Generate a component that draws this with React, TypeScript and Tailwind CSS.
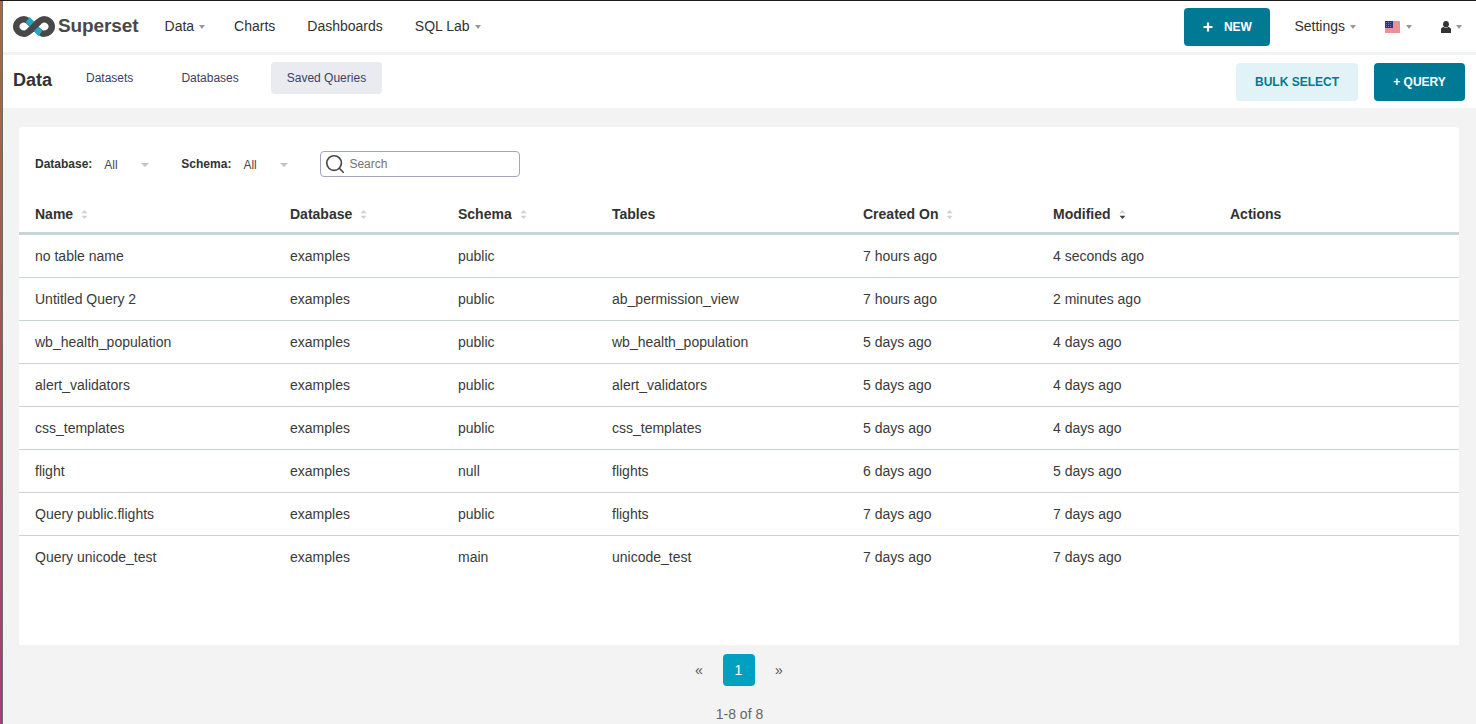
import { Search } from "lucide-react";

const rows = [
  ["no table name", "examples", "public", "", "7 hours ago", "4 seconds ago"],
  ["Untitled Query 2", "examples", "public", "ab_permission_view", "7 hours ago", "2 minutes ago"],
  ["wb_health_population", "examples", "public", "wb_health_population", "5 days ago", "4 days ago"],
  ["alert_validators", "examples", "public", "alert_validators", "5 days ago", "4 days ago"],
  ["css_templates", "examples", "public", "css_templates", "5 days ago", "4 days ago"],
  ["flight", "examples", "null", "flights", "6 days ago", "5 days ago"],
  ["Query public.flights", "examples", "public", "flights", "7 days ago", "7 days ago"],
  ["Query unicode_test", "examples", "main", "unicode_test", "7 days ago", "7 days ago"],
];

const columns = [
  { label: "Name", width: "w-[255px]", sort: "none" },
  { label: "Database", width: "w-[168px]", sort: "none" },
  { label: "Schema", width: "w-[154px]", sort: "none" },
  { label: "Tables", width: "w-[251px]", sort: "" },
  { label: "Created On", width: "w-[190px]", sort: "none" },
  { label: "Modified", width: "w-[177px]", sort: "desc" },
  { label: "Actions", width: "", sort: "" },
];

function Caret({ className = "" }: { className?: string }) {
  return <span className={`inline-block h-0 w-0 border-x-[3.5px] border-t-[4px] border-x-transparent border-t-[#999] align-middle ${className}`} />;
}

// the select arrows in the filter row are wider and paler than the nav ones
function SelectCaret() {
  return <span className="mt-[1px] inline-block h-0 w-0 border-x-[4px] border-t-[4px] border-x-transparent border-t-[#c4c4c4]" />;
}

function SortIcon({ desc }: { desc: boolean }) {
  return (
    <svg width="7" height="11" viewBox="0 0 7 11" className="ml-[8px] inline-block">
      <path d="M3.5 1 L6.5 4.2 H0.5 Z" fill="#d0d0d0" />
      <path d="M3.5 10 L6.5 6.8 H0.5 Z" fill={desc ? "#444444" : "#d0d0d0"} />
    </svg>
  );
}

function Logo() {
  return (
    <svg width="42" height="21" viewBox="0 0 42 21" className="shrink-0">
      <path
        d="M21 10.5 C17 6.5 14.5 3.2 11 3.2 C7 3.2 3.2 6.5 3.2 10.5 C3.2 14.5 7 17.8 11 17.8 C14.5 17.8 17 14.5 21 10.5 C25 6.5 27.5 3.2 31 3.2 C35 3.2 38.8 6.5 38.8 10.5 C38.8 14.5 35 17.8 31 17.8 C27.5 17.8 25 14.5 21 10.5 Z"
        fill="none"
        stroke="#484848"
        strokeWidth="6.4"
      />
      <path d="M14.5 3.6 C16.5 5 18 7 19.8 9 M22.2 12 C24 14 25.5 16 27.5 17.4" fill="none" stroke="#20a7c9" strokeWidth="6.4" />
      <path d="M16.5 15 L25.5 6" fill="none" stroke="#484848" strokeWidth="6.4" />
    </svg>
  );
}

function Flag() {
  return (
    <svg width="15" height="12" viewBox="0 0 15 12">
      <rect width="15" height="12" fill="#ffffff" />
      <path d="M0 1 H15 M0 3 H15 M0 5 H15 M0 7 H15 M0 9 H15 M0 11 H15" stroke="#d8222f" strokeWidth="1" />
      <rect width="8" height="7" fill="#33337a" />
      <path d="M1 1.5 H7 M1 3.5 H7 M1 5.5 H7" stroke="#aab0d8" strokeWidth="0.6" strokeDasharray="1 1" />
    </svg>
  );
}

function User() {
  return (
    <svg width="10" height="12" viewBox="0 0 10 12">
      <ellipse cx="5" cy="3.2" rx="2.9" ry="3.2" fill="#323232" />
      <path d="M0 12 V8.5 C0 7 1.4 6 2.6 6 C3.4 6.6 4.2 6.9 5 6.9 C5.8 6.9 6.6 6.6 7.4 6 C8.6 6 10 7 10 8.5 V12 Z" fill="#323232" />
    </svg>
  );
}

export default function App() {
  return (
    <div className="relative h-[724px] overflow-hidden border-t border-t-[#1c1c1c] bg-[#f3f3f3] pl-[3px] font-['Liberation_Sans',Arial,sans-serif] text-[14px] text-[#323232]">
      {/* bit of desktop wallpaper showing at the window edge */}
      <div className="absolute top-0 bottom-0 left-0 w-[2px] bg-gradient-to-b from-[#a86a3e] via-[#a5505a] to-[#a63f78]" />
      <div className="absolute top-0 bottom-0 left-[2px] w-px bg-[#6b6b6b]" />

      {/* main nav */}
      <nav className="flex h-[51px] items-center bg-white pr-[14px]">
        <div className="ml-[10px] flex items-center">
          <Logo />
          <span className="ml-[3px] text-[19px] font-bold tracking-[-0.1px] text-[#484848]">Superset</span>
        </div>
        <div className="ml-[26px] flex items-center gap-[32px]">
          <span>Data<Caret className="mr-[-3px] mb-[1px] ml-[5px]" /></span>
          <span>Charts</span>
          <span>Dashboards</span>
          <span>SQL Lab<Caret className="mr-[-3px] mb-[1px] ml-[5px]" /></span>
        </div>
        <div className="ml-auto flex items-center">
          <button className="flex h-[38px] w-[86px] items-center justify-center rounded-[4px] bg-[#007a94] text-[12px] font-bold text-white">
            <svg width="10" height="10" viewBox="0 0 10 10" className="mr-[11px]">
              <path d="M5 0.5 V9.5 M0.5 5 H9.5" stroke="#ffffff" strokeWidth="2.2" />
            </svg>
            NEW
          </button>
          <span className="ml-[24px]">Settings<Caret className="mb-[1px] ml-[5px]" /></span>
          <span className="ml-[29px] flex items-center"><Flag /><Caret className="ml-[6px]" /></span>
          <span className="ml-[29px] flex items-center"><User /><Caret className="ml-[5px]" /></span>
        </div>
      </nav>

      {/* sub menu */}
      <div className="mt-[3px] flex h-[53px] items-center bg-white pr-[11px]">
        <span className="mb-[2px] ml-[10px] text-[18px] font-bold">Data</span>
        <div className="mb-[8px] ml-[18px] flex items-center text-[12px] text-[#3b3f63]">
          <span className="flex h-[32px] items-center px-[16px]">Datasets</span>
          <span className="ml-[16px] flex h-[32px] items-center px-[16px]">Databases</span>
          <span className="ml-[16px] flex h-[32px] items-center rounded-[4px] bg-[#e9ebf1] px-[16px]">Saved Queries</span>
        </div>
        <div className="ml-auto flex items-center gap-[16px]">
          <button className="h-[38px] w-[122px] rounded-[4px] bg-[#e2f3f7] text-[12px] font-bold text-[#007a94]">BULK SELECT</button>
          <button className="h-[38px] w-[91px] rounded-[4px] bg-[#007a94] text-[12px] font-bold text-white">+ QUERY</button>
        </div>
      </div>

      {/* list card */}
      <div className="mt-[19px] mr-[17px] ml-[16px] h-[518px] rounded-t-[4px] bg-white">
        <div className="flex items-center pt-[24px] pl-[16px] text-[12px]">
          <span className="font-bold">Database:</span>
          <span className="mt-[1px] ml-[12px] w-[37px] text-[#484848]">All</span>
          <SelectCaret />
          <span className="ml-[32px] font-bold">Schema:</span>
          <span className="mt-[1px] ml-[12px] w-[37px] text-[#484848]">All</span>
          <SelectCaret />
          <div className="ml-[32px] flex h-[26px] w-[200px] items-center rounded-[4px] border border-[#a3a7bd] pl-[3px]">
            <Search size={22} strokeWidth={1.8} className="text-[#484848]" />
            <span className="ml-[3px] text-[#737373]">Search</span>
          </div>
        </div>

        <table className="mt-[18px] w-full table-fixed border-separate border-spacing-0">
          <thead>
            <tr>
              {columns.map((col) => (
                <th key={col.label} className={`${col.width} h-[40px] border-b-[3px] border-[#c7d5d9] pt-[1px] pl-[16px] text-left font-bold`}>
                  {col.label}
                  {col.sort !== "" && <SortIcon desc={col.sort === "desc"} />}
                </th>
              ))}
            </tr>
          </thead>
          <tbody className="text-[#3a3a3a]">
            {rows.map((row, r) => (
              <tr key={row[0]}>
                {[...row, ""].map((cell, i) => (
                  <td key={i} className={r < rows.length - 1 ? "h-[43px] border-b border-[#c7d5d9] pl-[16px]" : "h-[43px] pl-[16px]"}>
                    {cell}
                  </td>
                ))}
              </tr>
            ))}
          </tbody>
        </table>
      </div>

      {/* pagination */}
      <div className="flex flex-col items-center text-[#666]">
        <div className="mt-[9px] mr-[2px] flex items-center">
          <span className="flex h-[32px] w-[32px] items-center justify-center pl-[1px] text-[#555]">«</span>
          <span className="mx-[8px] flex h-[32px] w-[32px] items-center justify-center rounded-[4px] bg-[#00a0c0] text-white">1</span>
          <span className="flex h-[32px] w-[32px] items-center justify-center pl-[1px] text-[#555]">»</span>
        </div>
        <div className="mt-[18px]">1-8 of 8</div>
      </div>
    </div>
  );
}
